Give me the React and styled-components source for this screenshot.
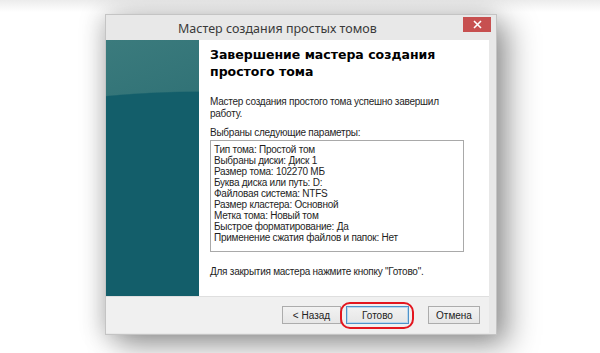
import React from 'react';
import styled, { createGlobalStyle } from 'styled-components';

const GlobalStyle = createGlobalStyle`
    html, body {
        margin: 0;
        padding: 0;
        background: #ffffff;
    }
    body {
        width: 600px;
        height: 353px;
        overflow: hidden;
        font-family: "Liberation Sans", Arial, sans-serif;
    }
`;

const params = [
    'Тип тома: Простой том',
    'Выбраны диски: Диск 1',
    'Размер тома: 102270 МБ',
    'Буква диска или путь: D:',
    'Файловая система: NTFS',
    'Размер кластера: Основной',
    'Метка тома: Новый том',
    'Быстрое форматирование: Да',
    'Применение сжатия файлов и папок: Нет',
];

class App extends React.Component {
    render() {
        return (
            <Page>
                <GlobalStyle />
                <Window>
                    <TitleBar>
                        <Title>Мастер создания простых томов</Title>
                        <CloseButton>
                            <svg width="9" height="9" viewBox="0 0 9 9">
                                <path d="M1 1 L8 8 M8 1 L1 8" stroke="#fff" strokeWidth="1.6" />
                            </svg>
                        </CloseButton>
                    </TitleBar>
                    <Client>
                        <Main>
                            <SidePanel />
                            <Content>
                                <Heading>Завершение мастера создания простого тома</Heading>
                                <Paragraph>Мастер создания простого тома успешно завершил работу.</Paragraph>
                                <Label>Выбраны следующие параметры:</Label>
                                <ListBox>
                                    {params.map((line) => (
                                        <ListLine key={line}>{line}</ListLine>
                                    ))}
                                </ListBox>
                                <Hint>Для закрытия мастера нажмите кнопку "Готово".</Hint>
                            </Content>
                        </Main>
                        <Footer>
                            <Button width={59}>&lt; Назад</Button>
                            <Highlight>
                                <Button width={63} primary>Готово</Button>
                            </Highlight>
                            <Button width={52}>Отмена</Button>
                        </Footer>
                    </Client>
                </Window>
            </Page>
        );
    }
}

export default App;

const Page = styled.div`
    width: 600px;
    height: 353px;
    padding: 14px 0 0 105px;
    box-sizing: border-box;
    background: linear-gradient(180deg, #ececec 0px, #ffffff 12px);
`;

const Window = styled.div`
    width: 392px;
    height: 321px;
    box-sizing: border-box;
    display: flex;
    flex-direction: column;
    background: #e8e8e8;
    border: 1px solid #c4c4c4;
    box-shadow: 12px 10px 28px rgba(0, 0, 0, 0.38), -4px 0 22px rgba(0, 0, 0, 0.18);
`;

const TitleBar = styled.div`
    height: 25px;
    display: flex;
    align-items: flex-start;
    justify-content: space-between;
    padding: 0 5px 0 72px;
`;

const Title = styled.div`
    font-family: "Noto Sans", "Open Sans", sans-serif;
    font-size: 12.5px;
    line-height: 14px;
    color: #3a3a3a;
    padding-top: 7px;
`;

const CloseButton = styled.div`
    width: 28px;
    height: 15px;
    margin-top: 2px;
    background: #c75050;
    display: flex;
    align-items: center;
    justify-content: center;
`;

const Client = styled.div`
    flex: 1;
    display: flex;
    flex-direction: column;
    margin: 0 7px 1px 0;
`;

const Main = styled.div`
    height: 256px;
    display: flex;
    background: #ffffff;
`;

const SidePanel = styled.div`
    width: 93px;
    background:
        radial-gradient(ellipse 506px 256px at 94px 307px, #135e6a 99.5%, transparent 100%),
        linear-gradient(160deg, #3b7b7d 0%, #2c6e73 45%, #22666c 100%);
`;

const Content = styled.div`
    flex: 1;
    padding: 6px 0 0 11px;
    color: #1e1e1e;
    font-size: 10px;
    letter-spacing: -0.25px;
`;

const Heading = styled.div`
    font-family: "DejaVu Sans", Verdana, sans-serif;
    font-weight: bold;
    font-size: 12.5px;
    line-height: 17px;
    letter-spacing: 0;
    width: 270px;
    color: #000;
`;

const Paragraph = styled.div`
    margin-top: 16px;
    line-height: 12px;
    width: 250px;
`;

const Label = styled.div`
    margin-top: 7px;
    line-height: 12px;
`;

const ListBox = styled.div`
    margin-top: 1px;
    width: 254px;
    height: 112px;
    box-sizing: border-box;
    border: 1px solid #a9a9a9;
    padding: 3px 0 0 3px;
`;

const ListLine = styled.div`
    line-height: 11px;
    white-space: nowrap;
`;

const Hint = styled.div`
    margin-top: 14px;
    line-height: 12px;
`;

const Footer = styled.div`
    flex: 1;
    display: flex;
    align-items: flex-start;
    justify-content: flex-end;
    padding: 9px 9px 0 0;
    background: #f0f0f0;
    border-top: 1px solid #dfdfdf;
`;

const Highlight = styled.span`
    position: relative;
    display: flex;
    margin: 0 19px 0 5px;

    &:after {
        content: '';
        position: absolute;
        left: -6px;
        right: -5px;
        top: -4px;
        bottom: -5px;
        border: 2px solid #e3161f;
        border-radius: 10px;
    }
`;

const Button = styled.div`
    width: ${(props) => props.width}px;
    height: 18px;
    box-sizing: border-box;
    display: flex;
    align-items: center;
    justify-content: center;
    font-size: 10px;
    color: #222;
    background: linear-gradient(180deg, #f2f2f2 0%, #e6e6e6 100%);
    border: 1px solid ${(props) => (props.primary ? '#4f92c8' : '#acacac')};
    box-shadow: ${(props) => (props.primary ? 'inset 0 0 0 1px #b9d7ee' : 'none')};
`;
